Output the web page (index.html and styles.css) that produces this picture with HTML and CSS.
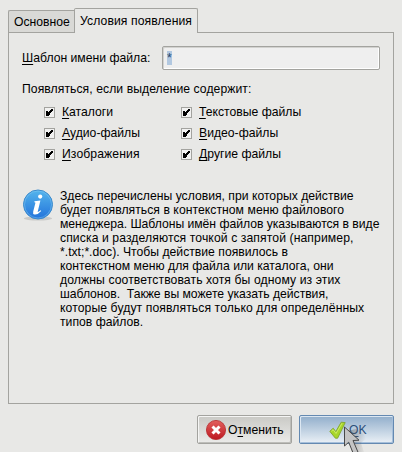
FILE: index.html
```html
<!DOCTYPE html>
<html lang="ru">
<head>
<meta charset="utf-8">
<title>Условия появления</title>
<link rel="stylesheet" href="styles.css">
</head>
<body>
<div class="dialog">
  <div class="tabs">
    <div class="tab"><span>Основное</span></div>
    <div class="tab active"><span class="looser">Условия появления</span></div>
    <div class="tab-rest"></div>
  </div>
  <div class="panel">
    <div class="pattern">
      <label><u>Ш</u>аблон имени файла:</label>
      <div class="field"><span class="selected">*</span></div>
    </div>
    <div class="heading"><span>Появляться, если выделение содержит:</span></div>
    <div class="checks">
      <div class="check"><svg class="box" viewBox="0 0 11 11"><path d="M.5.5h10v10H.5z"/><path class="tick" d="M2 4h2v1h1V4h1V3h1V2h2v2H8v1H7v1H6v2H5v1H2z"/></svg><span><u>К</u>аталоги</span></div>
      <div class="check"><svg class="box" viewBox="0 0 11 11"><path d="M.5.5h10v10H.5z"/><path class="tick" d="M2 4h2v1h1V4h1V3h1V2h2v2H8v1H7v1H6v2H5v1H2z"/></svg><span><u>Т</u>екстовые файлы</span></div>
      <div class="check"><svg class="box" viewBox="0 0 11 11"><path d="M.5.5h10v10H.5z"/><path class="tick" d="M2 4h2v1h1V4h1V3h1V2h2v2H8v1H7v1H6v2H5v1H2z"/></svg><span><u>А</u>удио-файлы</span></div>
      <div class="check"><svg class="box" viewBox="0 0 11 11"><path d="M.5.5h10v10H.5z"/><path class="tick" d="M2 4h2v1h1V4h1V3h1V2h2v2H8v1H7v1H6v2H5v1H2z"/></svg><span><u>В</u>идео-файлы</span></div>
      <div class="check"><svg class="box" viewBox="0 0 11 11"><path d="M.5.5h10v10H.5z"/><path class="tick" d="M2 4h2v1h1V4h1V3h1V2h2v2H8v1H7v1H6v2H5v1H2z"/></svg><span class="looser"><u>И</u>зображения</span></div>
      <div class="check"><svg class="box" viewBox="0 0 11 11"><path d="M.5.5h10v10H.5z"/><path class="tick" d="M2 4h2v1h1V4h1V3h1V2h2v2H8v1H7v1H6v2H5v1H2z"/></svg><span><u>Д</u>ругие файлы</span></div>
    </div>
    <div class="info">
      <svg class="info-icon" viewBox="0 0 32 32">
        <defs><linearGradient id="blue" x1="0" y1="0" x2="0" y2="1"><stop offset="0" stop-color="#54b5ec"/><stop offset="1" stop-color="#2373db"/></linearGradient></defs>
        <ellipse cx="16" cy="29.5" rx="14" ry="2" fill="#000" opacity=".13"/>
        <circle cx="16" cy="15.5" r="14.5" fill="url(#blue)" stroke="#3c8acb"/>
        <circle cx="16" cy="15.5" r="13.5" fill="none" stroke="#8accf3" stroke-opacity=".45"/>
        <circle cx="18.2" cy="7.6" r="2.1" fill="#fff"/>
        <path d="M12.4 12.3l6-.8-2.7 11.2q-.2 1.2 3-1.4l.5.6q-3.5 4-6.7 3.5-2-.5-1.3-3l2.2-8.4q.1-.8-1-.8z" fill="#fff"/>
      </svg>
      <p>Здесь перечислены условия, при которых действие<br><span class="loose">будет появляться в контекстном меню файлового</span><br><span class="snug">менеджера. Шаблоны имён файлов указываются в виде</span><br><span class="looser">списка и разделяются точкой с запятой (например,</span><br><span>*.txt;*.doc). Чтобы действие появилось в</span><br>контекстном меню для файла или каталога, они<br><span class="looser">должны соответствовать хотя бы одному из этих</span><br><span class="snug">шаблонов.&nbsp; Также вы можете указать действия,</span><br><span class="looser">которые будут появляться только для определённых</span><br>типов файлов.</p>
    </div>
  </div>
  <div class="actions">
    <div class="button cancel">
      <svg class="cancel-icon" viewBox="0 0 20 20">
        <defs><linearGradient id="red" x1="0" y1="0" x2="0" y2="1"><stop offset="0" stop-color="#e2605e"/><stop offset="1" stop-color="#bd1820"/></linearGradient></defs>
        <circle cx="10" cy="10" r="9.6" fill="url(#red)" stroke="#b52a2c" stroke-width=".8"/>
        <path d="M6.5 6.5l7 7m0-7l-7 7" stroke="#fff" stroke-width="3"/>
      </svg>
      <span>О<u>т</u>менить</span>
    </div>
    <div class="button ok">
      <svg class="ok-icon" viewBox="0 0 18 18"><path d="M.8 10.3L4.2 7.2l2.6 3.3L12.2 1.2l4 .4L8.6 17.2H6.4z" fill="#a8d62a" stroke="#7fa52f" stroke-width=".9"/><path d="M2.4 10.3l1.7-1.6 2.9 3.8L13 2.3" fill="none" stroke="#cdec68"/></svg>
      <span><u>O</u>K</span>
    </div>
  </div>
</div>
<svg class="cursor" viewBox="0 0 34 27">
  <defs><linearGradient id="shade"><stop offset="0" stop-color="#555" stop-opacity=".5"/><stop offset="1" stop-color="#555" stop-opacity="0"/></linearGradient></defs>
  <path d="M4 6l9-2q9 4 10 10l-5 4 3 9H9z" fill="url(#shade)"/>
  <path d="M1.5 2v19l4.2-3.8 4.8 11.8 4.5-1.8-5-11.7 6-.3z" fill="#c4c4c4" stroke="#484848" stroke-width="1"/>
</svg>
</body>
</html>
```
FILE: styles.css
```css
* { box-sizing: border-box; }
body {
  margin: 0;
  width: 402px;
  height: 452px;
  overflow: hidden;
  position: relative;
  background: #e8e8e6;
  color: #000;
  font: 12.2px/14px "Liberation Sans", Arial, sans-serif;
  white-space: nowrap;
}
u { text-decoration: underline; text-underline-offset: 2px; text-decoration-thickness: 1px; text-decoration-skip-ink: none; }
svg { display: block; flex: none; }
.dialog { padding: 8px 8px 0; }
.tabs { display: flex; align-items: flex-end; height: 25px; width: 386px; }
.tab {
  width: 66px;
  height: 23px;
  padding: 4px 0 0 5px;
  border: 1px solid #a3a39f;
  border-right: 0;
  border-top-left-radius: 2px;
  background: #d9d9d6;
}
.tab.active {
  width: 124px;
  height: 25px;
  padding: 5px 0 0 5px;
  border: 1px solid #a3a39f;
  border-bottom: 0;
  border-radius: 2px 2px 0 0;
  background: #e8e8e6;
}
.tab-rest { flex: 1; height: 1px; background: #a3a39f; }
.panel {
  width: 386px;
  height: 371px;
  padding: 13px 12px 0 13px;
  border: 1px solid #a3a39f;
  border-top: 0;
}
.pattern { display: flex; align-items: center; }
.pattern label { width: 140px; }
.field {
  width: 218px;
  height: 24px;
  padding: 4px 0 0 4px;
  border: 1px solid #a3a39f;
  border-radius: 2px;
  background: #efefef;
  box-shadow: inset 1px 1px #d2d2cf, inset -1px -1px #fff;
}
.selected { display: block; width: 5px; height: 14px; background: #b2c8e0; color: #24466b; }
.heading { margin-top: 12px; letter-spacing: 0.06px; }
.checks {
  display: grid;
  grid-template-columns: 137px 1fr;
  grid-auto-rows: 21px;
  margin: 6px 0 0 22px;
}
.check { display: flex; align-items: center; gap: 7px; }
.check span { padding-bottom: 2px; }
.box { width: 11px; height: 11px; fill: #f1f1f0; stroke: #a3a39f; shape-rendering: crispEdges; }
.box .tick { fill: #000; stroke: none; }
.info { display: flex; margin-top: 24px; }
.info-icon { width: 32px; height: 32px; }
.info p { margin: 0 0 0 6px; }
.loose { letter-spacing: 0.04px; }
.looser { letter-spacing: 0.09px; }
.snug { letter-spacing: -0.03px; }
.actions { display: flex; gap: 7px; justify-content: flex-end; margin-top: 11px; }
.button {
  display: flex;
  align-items: center;
  width: 95px;
  height: 29px;
  border: 1px solid #a3a39f;
  border-radius: 2px;
}
.cancel { gap: 2px; padding-left: 8px; background: linear-gradient(#c9c9c5, #ebebe9); box-shadow: inset 1px 1px #f5f5f4, inset -1px -1px #bdbdb9; }
.cancel-icon { width: 20px; height: 20px; }
.ok { gap: 2px; padding-left: 29px; background: linear-gradient(#91aecb, #eaf0f6); border-color: #6489b1; box-shadow: inset 1px 1px #dce7f2, inset -1px -1px #a6bfda; color: #2b4f7b; }
.ok-icon { width: 18px; height: 18px; }
.cursor { position: absolute; left: 343px; top: 425px; width: 34px; height: 27px; }
```
